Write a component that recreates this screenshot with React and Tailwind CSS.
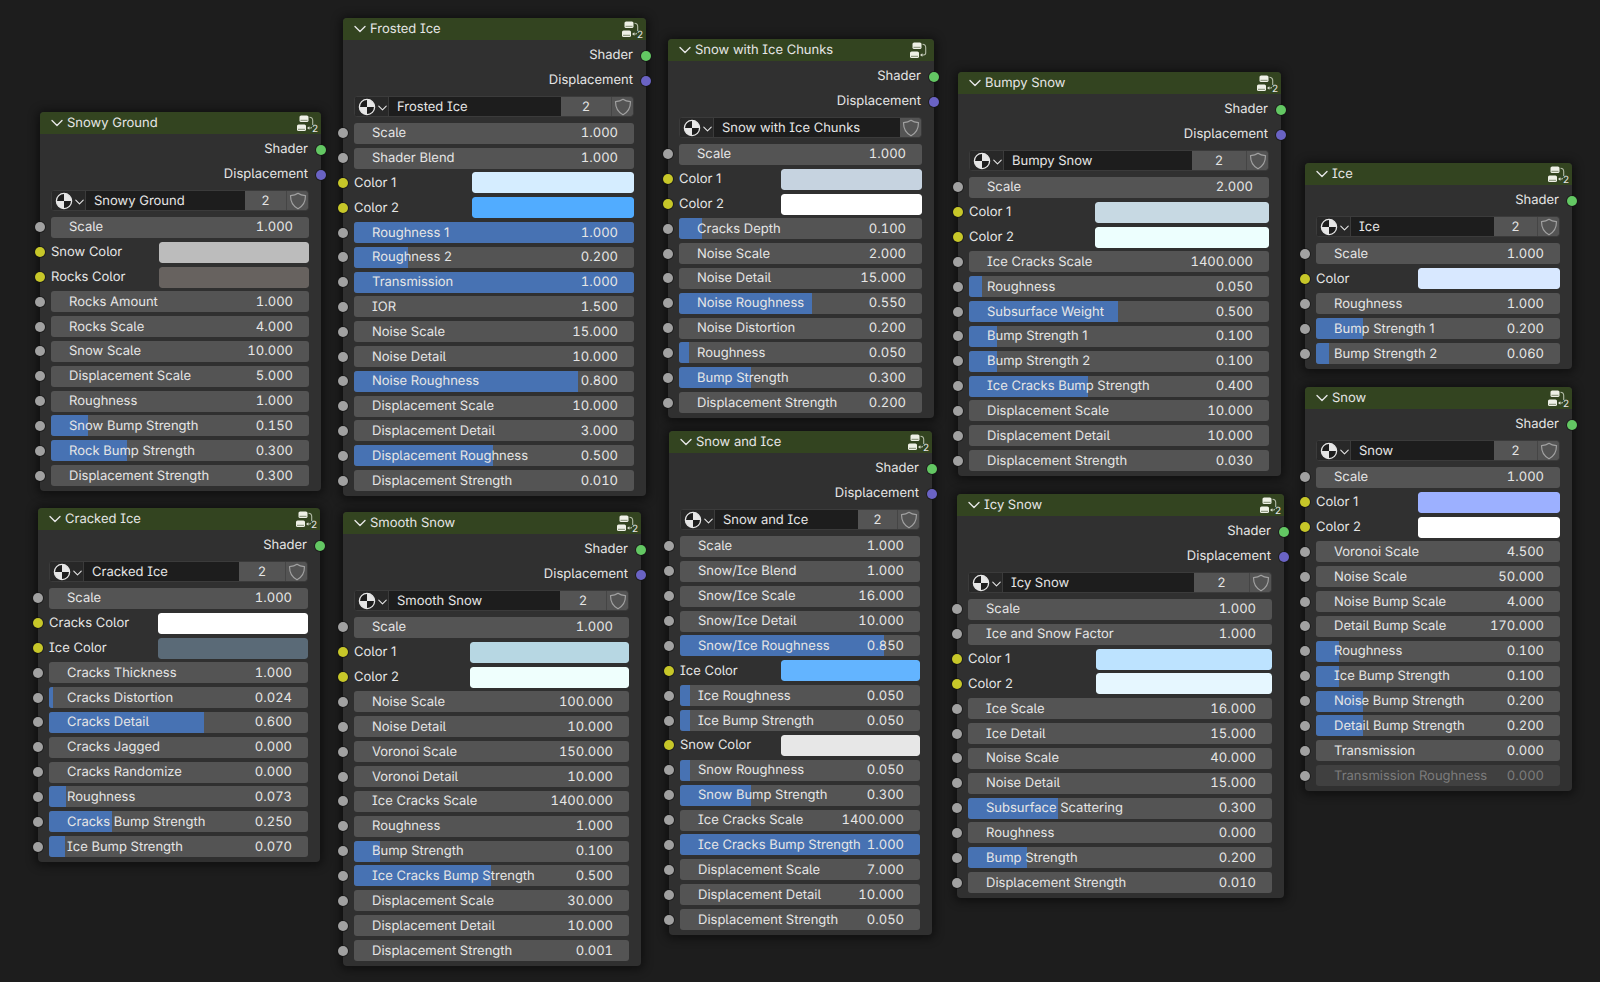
import { useId, useState } from "react";

// Row helpers: plain number, 0–1 slider and color inputs.
const num = (label, value) => ({ kind: "number", label, value });
const fac = (label, value, disabled = false) => ({ kind: "factor", label, value, disabled });
const col = (label, value) => ({ kind: "color", label, value });

const NODES = [
  {
    name: "Snowy Ground",
    frame: "left-[40px] top-[112px] w-[281px] h-[379px]",
    users: 2,
    usersWidth: "w-[42px]",
    outputs: ["Shader", "Displacement"],
    inputs: [
      num("Scale", 1),
      col("Snow Color", "#bcbcbc"),
      col("Rocks Color", "#67625f"),
      num("Rocks Amount", 1),
      num("Rocks Scale", 4),
      num("Snow Scale", 10),
      num("Displacement Scale", 5),
      num("Roughness", 1),
      fac("Snow Bump Strength", 0.15),
      fac("Rock Bump Strength", 0.3),
      num("Displacement Strength", 0.3),
    ],
  },
  {
    name: "Cracked Ice",
    frame: "left-[38px] top-[508px] w-[282px] h-[354px]",
    users: 2,
    usersWidth: "w-[47px]",
    outputs: ["Shader"],
    inputs: [
      num("Scale", 1),
      col("Cracks Color", "#ffffff"),
      col("Ice Color", "#5a6a77"),
      num("Cracks Thickness", 1),
      fac("Cracks Distortion", 0.024),
      fac("Cracks Detail", 0.6),
      fac("Cracks Jagged", 0),
      fac("Cracks Randomize", 0),
      fac("Roughness", 0.073),
      fac("Cracks Bump Strength", 0.25),
      fac("Ice Bump Strength", 0.07),
    ],
  },
  {
    name: "Frosted Ice",
    frame: "left-[343px] top-[18px] w-[303px] h-[478px]",
    users: 2,
    usersWidth: "w-[51px]",
    outputs: ["Shader", "Displacement"],
    inputs: [
      num("Scale", 1),
      num("Shader Blend", 1),
      col("Color 1", "#d5edff"),
      col("Color 2", "#51acff"),
      fac("Roughness 1", 1),
      fac("Roughness 2", 0.2),
      fac("Transmission", 1),
      num("IOR", 1.5),
      num("Noise Scale", 15),
      num("Noise Detail", 10),
      fac("Noise Roughness", 0.8),
      num("Displacement Scale", 10),
      num("Displacement Detail", 3),
      fac("Displacement Roughness", 0.5),
      num("Displacement Strength", 0.01),
    ],
  },
  {
    name: "Smooth Snow",
    frame: "left-[343px] top-[512px] w-[298px] h-[454px]",
    users: 2,
    usersWidth: "w-[47px]",
    outputs: ["Shader", "Displacement"],
    inputs: [
      num("Scale", 1),
      col("Color 1", "#b7d7e3"),
      col("Color 2", "#effffd"),
      num("Noise Scale", 100),
      num("Noise Detail", 10),
      num("Voronoi Scale", 150),
      num("Voronoi Detail", 10),
      num("Ice Cracks Scale", 1400),
      num("Roughness", 1),
      fac("Bump Strength", 0.1),
      fac("Ice Cracks Bump Strength", 0.5),
      num("Displacement Scale", 30),
      num("Displacement Detail", 10),
      num("Displacement Strength", 0.001),
    ],
  },
  {
    name: "Snow with Ice Chunks",
    frame: "left-[668px] top-[39px] w-[266px] h-[379px]",
    users: 1,
    usersWidth: "w-0",
    outputs: ["Shader", "Displacement"],
    inputs: [
      num("Scale", 1),
      col("Color 1", "#c6d3e0"),
      col("Color 2", "#ffffff"),
      fac("Cracks Depth", 0.1),
      num("Noise Scale", 2),
      num("Noise Detail", 15),
      fac("Noise Roughness", 0.55),
      num("Noise Distortion", 0.2),
      fac("Roughness", 0.05),
      fac("Bump Strength", 0.3),
      num("Displacement Strength", 0.2),
    ],
  },
  {
    name: "Snow and Ice",
    frame: "left-[669px] top-[431px] w-[263px] h-[504px]",
    users: 2,
    usersWidth: "w-[40px]",
    outputs: ["Shader", "Displacement"],
    inputs: [
      num("Scale", 1),
      num("Snow/Ice Blend", 1),
      num("Snow/Ice Scale", 16),
      num("Snow/Ice Detail", 10),
      fac("Snow/Ice Roughness", 0.85),
      col("Ice Color", "#63b4ff"),
      fac("Ice Roughness", 0.05),
      fac("Ice Bump Strength", 0.05),
      col("Snow Color", "#e7e7e7"),
      fac("Snow Roughness", 0.05),
      fac("Snow Bump Strength", 0.3),
      num("Ice Cracks Scale", 1400),
      fac("Ice Cracks Bump Strength", 1),
      num("Displacement Scale", 7),
      num("Displacement Detail", 10),
      num("Displacement Strength", 0.05),
    ],
  },
  {
    name: "Bumpy Snow",
    frame: "left-[958px] top-[72px] w-[323px] h-[404px]",
    users: 2,
    usersWidth: "w-[55px]",
    outputs: ["Shader", "Displacement"],
    inputs: [
      num("Scale", 2),
      col("Color 1", "#c7d9e3"),
      col("Color 2", "#edfffe"),
      num("Ice Cracks Scale", 1400),
      fac("Roughness", 0.05),
      fac("Subsurface Weight", 0.5),
      fac("Bump Strength 1", 0.1),
      fac("Bump Strength 2", 0.1),
      fac("Ice Cracks Bump Strength", 0.4),
      num("Displacement Scale", 10),
      num("Displacement Detail", 10),
      num("Displacement Strength", 0.03),
    ],
  },
  {
    name: "Icy Snow",
    frame: "left-[957px] top-[494px] w-[327px] h-[404px]",
    users: 2,
    usersWidth: "w-[56px]",
    outputs: ["Shader", "Displacement"],
    inputs: [
      num("Scale", 1),
      num("Ice and Snow Factor", 1),
      col("Color 1", "#bde3ff"),
      col("Color 2", "#e6f7ff"),
      num("Ice Scale", 16),
      num("Ice Detail", 15),
      num("Noise Scale", 40),
      num("Noise Detail", 15),
      fac("Subsurface Scattering", 0.3),
      fac("Roughness", 0),
      fac("Bump Strength", 0.2),
      num("Displacement Strength", 0.01),
    ],
  },
  {
    name: "Ice",
    frame: "left-[1305px] top-[163px] w-[267px] h-[206px]",
    users: 2,
    usersWidth: "w-[44px]",
    outputs: ["Shader"],
    inputs: [
      num("Scale", 1),
      col("Color", "#d8e8ff"),
      num("Roughness", 1),
      fac("Bump Strength 1", 0.2),
      fac("Bump Strength 2", 0.06),
    ],
  },
  {
    name: "Snow",
    frame: "left-[1305px] top-[387px] w-[267px] h-[404px]",
    users: 2,
    usersWidth: "w-[44px]",
    outputs: ["Shader"],
    inputs: [
      num("Scale", 1),
      col("Color 1", "#9cb0ff"),
      col("Color 2", "#ffffff"),
      num("Voronoi Scale", 4.5),
      num("Noise Scale", 50),
      num("Noise Bump Scale", 4),
      num("Detail Bump Scale", 170),
      fac("Roughness", 0.1),
      fac("Ice Bump Strength", 0.1),
      fac("Noise Bump Strength", 0.2),
      fac("Detail Bump Strength", 0.2),
      fac("Transmission", 0),
      fac("Transmission Roughness", 0, true),
    ],
  },
];

const SOCKET_COLORS = {
  Shader: "bg-[#63c763]",
  Displacement: "bg-[#6a63c4]",
  color: "bg-[#c7c729]",
  number: "bg-[#a1a1a1]",
  factor: "bg-[#a1a1a1]",
};

function Socket({ type, side }) {
  const place = side === "right" ? "-right-[5px]" : "-left-[5px]";
  return (
    <span
      className={`absolute top-1/2 size-[10px] -translate-y-1/2 rounded-full shadow-[0_0_0_1px_rgba(20,20,20,0.6)] ${place} ${SOCKET_COLORS[type]}`}
    />
  );
}

function NodeTreeIcon({ users }) {
  return (
    <span className="relative flex size-[22px] items-center text-[#e6e6e6]">
      <svg viewBox="0 0 22 22" className="size-[22px]" fill="none">
        <rect x="3.500" y="3.500" width="9" height="6.500" rx="1.600" fill="#eef0e6" />
        <path d="M4.500 8.300h7" stroke="#7f8a70" strokeWidth="1" />
        <rect x="1" y="12.500" width="9" height="6.500" rx="1.600" fill="#eef0e6" />
        <path d="M2 17.300h7" stroke="#7f8a70" strokeWidth="1" />
        <path d="M13.500 5.300c2.400.2 3.200 1.200 3.200 3.200v5.300c0 1.500-.6 2.200-2 2.200h-2.500" stroke="#b4bca8" strokeWidth="1.100" />
        <path d="M11 16l2.400-1.800v3.600z" fill="#d9dccf" />
      </svg>
      {users > 1 && (
        <span className="absolute right-0 bottom-[1px] bg-[#334420] text-[10px] leading-[8px]">{users}</span>
      )}
    </span>
  );
}

function MaterialIcon() {
  return (
    <svg viewBox="0 0 18 18" className="size-[18px] shrink-0">
      <circle cx="9" cy="9" r="7.600" fill="#1d1d1d" stroke="#e6e6e6" strokeWidth="1.300" />
      <path d="M9 9V1.400A7.600 7.600 0 0 1 16.600 9z" fill="#e6e6e6" />
      <path d="M9 9v7.600A7.600 7.600 0 0 1 1.400 9z" fill="#e6e6e6" />
    </svg>
  );
}

function Chevron({ className }) {
  return (
    <svg viewBox="0 0 12 8" className={className} fill="none">
      <path d="M1 1.500l5 5 5-5" stroke="currentColor" strokeWidth="1.400" strokeLinecap="round" strokeLinejoin="round" />
    </svg>
  );
}

function ShieldIcon() {
  return (
    <svg viewBox="0 0 18 18" className="size-[18px]" fill="none">
      <path
        d="M9 1.300c1.800 1.400 4.200 2.200 7.500 2.300 0 6.400-2 10.500-7.500 13.200C3.500 14.100 1.500 10 1.500 3.600 4.800 3.500 7.200 2.700 9 1.300z"
        stroke="#a0a0a0"
        strokeWidth="1.200"
        strokeLinejoin="round"
      />
    </svg>
  );
}

function NumberField({ label, value }) {
  const id = useId();
  const [text, setText] = useState(value.toFixed(3));
  return (
    <div className="flex h-[21px] w-full items-center rounded-[3px] bg-[#545454] pr-4 pl-[18px]">
      <label htmlFor={id} className="shrink-0 whitespace-nowrap">
        {label}
      </label>
      <input
        id={id}
        type="text"
        value={text}
        onChange={(e) => setText(e.target.value)}
        className="w-0 min-w-0 flex-1 bg-transparent text-right tabular-nums outline-none [text-rendering:inherit]"
      />
    </div>
  );
}

function FactorField({ label, value: initial, disabled }) {
  const id = useId();
  const [value, setValue] = useState(initial);
  const tone = disabled ? "bg-[#404040] text-[#7c7c7c]" : "bg-[#545454]";
  return (
    <div className={`relative flex h-[21px] w-full items-center overflow-hidden rounded-[3px] pr-4 pl-[18px] ${tone}`}>
      <span
        className="absolute inset-y-0 left-0 bg-[#4772b3]"
        style={{ width: value > 0 ? `calc(${value * 100}% - ${(1 - value) * 2}px)` : 0 }}
      />
      <label htmlFor={id} className="relative flex-1 whitespace-nowrap">
        {label}
      </label>
      <output htmlFor={id} className="relative tabular-nums">
        {value.toFixed(3)}
      </output>
      <input
        id={id}
        type="range"
        min="0"
        max="1"
        step="0.001"
        value={value}
        disabled={disabled}
        onChange={(e) => setValue(Number(e.target.value))}
        className="absolute inset-0 size-full opacity-0"
      />
    </div>
  );
}

function ColorField({ label, value: initial }) {
  const id = useId();
  const [value, setValue] = useState(initial);
  return (
    <div className="flex h-[21px] w-full items-center justify-between">
      <label htmlFor={id} className="whitespace-nowrap">
        {label}
      </label>
      <input
        id={id}
        type="color"
        value={value}
        onChange={(e) => setValue(e.target.value)}
        className="h-[21px] w-[58%] cursor-pointer appearance-none rounded-[3px] border-0 bg-transparent p-0 [&::-webkit-color-swatch]:rounded-[3px] [&::-webkit-color-swatch]:border-0 [&::-webkit-color-swatch-wrapper]:p-0"
      />
    </div>
  );
}

const FIELDS = { number: NumberField, factor: FactorField, color: ColorField };

function DataBlock({ name, users, usersWidth }) {
  const [text, setText] = useState(name);
  return (
    <div className="mr-3 ml-[11px] flex h-[21px] shrink-0 overflow-hidden rounded-[3px] border border-[#3b3b3b] bg-[#1d1d1d]">
      <button
        type="button"
        aria-label="Browse group"
        className="flex w-[34px] shrink-0 items-center gap-[2px] border-r border-[#3b3b3b] bg-[#282828] pl-[3px]"
      >
        <MaterialIcon />
        <Chevron className="mt-[2px] h-[6px] w-[9px]" />
      </button>
      <input
        type="text"
        aria-label="Group name"
        value={text}
        onChange={(e) => setText(e.target.value)}
        className="min-w-0 flex-1 bg-[#1d1d1d] pl-2 outline-none [text-rendering:inherit]"
      />
      {users > 1 && (
        <button
          type="button"
          className={`shrink-0 border-r border-[#454545] bg-[#545454] [text-rendering:inherit] ${usersWidth}`}
        >
          {users}
        </button>
      )}
      <button
        type="button"
        aria-label="Fake user"
        className="flex w-[21px] shrink-0 items-center justify-center bg-[#545454]"
      >
        <ShieldIcon />
      </button>
    </div>
  );
}

function Node({ name, frame, users, usersWidth, outputs, inputs }) {
  return (
    <section
      className={`absolute flex flex-col rounded-[4px] bg-[#303030] pb-[3px] shadow-[0_1px_10px_3px_rgba(0,0,0,0.45)] ${frame}`}
    >
      <header className="flex h-[22px] shrink-0 items-center rounded-t-[4px] bg-[#334420] pr-[3px] pb-px pl-[11px]">
        <button type="button" aria-label={`Collapse ${name}`} className="mr-1">
          <Chevron className="h-[8px] w-[12px]" />
        </button>
        <h2 className="flex-1 whitespace-nowrap">{name}</h2>
        <NodeTreeIcon users={users} />
      </header>
      <ul className="mb-[3px] shrink-0 pt-[3px]">
        {outputs.map((output) => (
          <li key={output} className="relative flex h-[25px] items-center justify-end pr-[13px] pb-px">
            {output}
            <Socket type={output} side="right" />
          </li>
        ))}
      </ul>
      <DataBlock name={name} users={users} usersWidth={usersWidth} />
      <ul className="mt-1 grid flex-1 auto-rows-fr grid-cols-1">
        {inputs.map((input) => {
          const Field = FIELDS[input.kind];
          return (
            <li key={input.label} className="relative flex items-center pr-3 pl-[11px]">
              <Socket type={input.kind} side="left" />
              <Field {...input} />
            </li>
          );
        })}
      </ul>
    </section>
  );
}

export default function App() {
  return (
    <main className="relative min-h-screen overflow-hidden bg-[#1d1d1d] font-['Inter',sans-serif] text-[13px] leading-5 text-[#e6e6e6] [font-feature-settings:'cv05','cv08'] [text-rendering:geometricPrecision]">
      {NODES.map((node) => (
        <Node key={node.name} {...node} />
      ))}
    </main>
  );
}
